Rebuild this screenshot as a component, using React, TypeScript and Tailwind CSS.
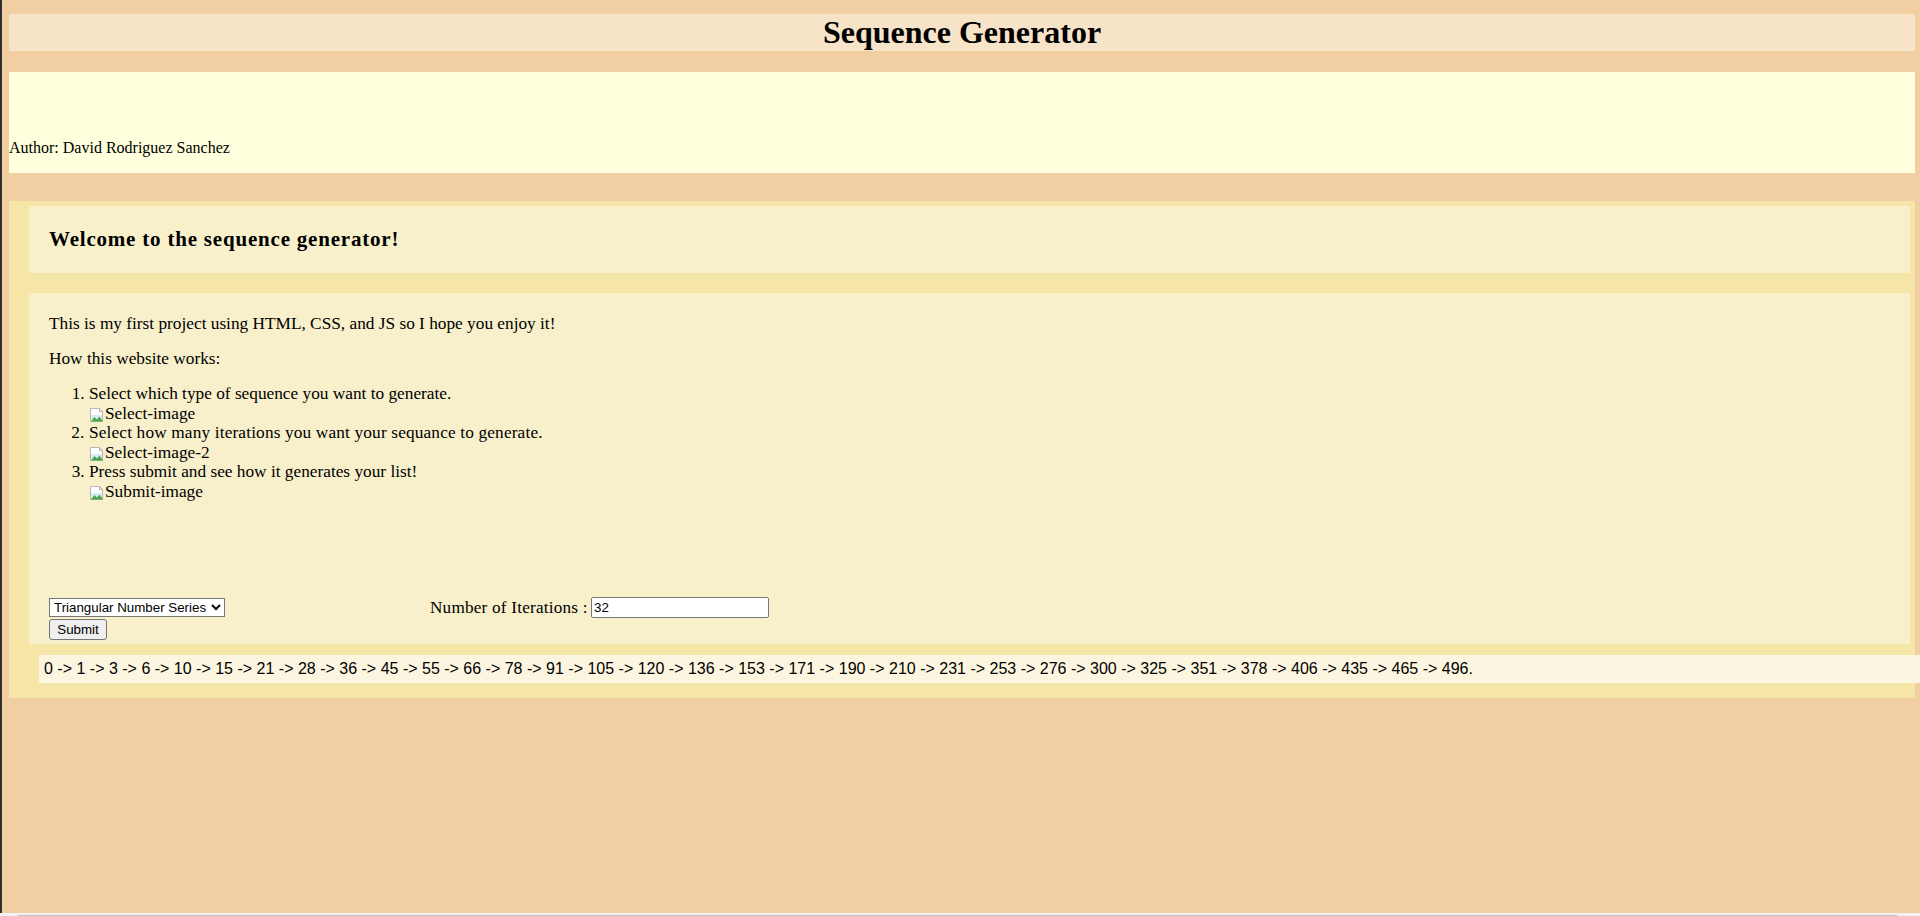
import React from "react";

function BrokenImg({ alt }: { alt: string }) {
  return (
    <span className="inline-flex items-end">
      <svg width="16" height="16" viewBox="0 0 16 16" className="shrink-0">
        <path d="M1.5 1.5h9l3 3v10h-12z" fill="#ffffff" stroke="#b5b5b5" />
        <path d="M10.5 1.5v3h3" fill="none" stroke="#b5b5b5" />
        <path d="M2 8h11v6H2z" fill="#dcecf7" />
        <path d="M2 14.5l3.5-4.5 2.5 2.5 2.5-3 3.5 5z" fill="#48a848" />
      </svg>
      <span>{alt}</span>
    </span>
  );
}

const seq = (() => {
  const arr: number[] = [];
  for (let i = 0; i < 32; i++) arr.push((i * (i + 1)) / 2);
  return arr.join(" -> ") + ".";
})();

export default function App() {
  return (
    <div className="h-[916px] w-[1920px] bg-[#f2cfa3] flex overflow-hidden relative text-black">
      <div className="w-[2px] bg-[#2f2f2f] shrink-0" />
      <div className="flex-1 min-w-0 pl-[7px] pr-[5px] pt-[14px] flex flex-col">
        <h1 className="h-[37px] bg-[#f7e3c8] flex items-center justify-center text-[32px] font-bold font-['Liberation_Serif',serif] leading-[37px]">
          Sequence Generator
        </h1>

        <div className="mt-[21px] h-[101px] bg-[#ffffdd] flex flex-col justify-end">
          <p className="mb-[16px] text-[16px] leading-[18px] font-['Liberation_Serif',serif]">
            Author: David Rodriguez Sanchez
          </p>
        </div>

        <div className="mt-[28px] bg-[#f5e6a7] pt-[5px] pl-[20px] pr-[5px] pb-[15px]">
          <div className="h-[67px] bg-[#f8f0cb] flex items-center px-[20px]">
            <h3 className="text-[21px] tracking-[0.8px] font-bold font-['Liberation_Serif',serif]">
              Welcome to the sequence generator!
            </h3>
          </div>

          <div className="mt-[20px] bg-[#f8f0cb] pt-[21px] pb-[4px] px-[20px] font-['Liberation_Serif',serif] text-[17.3px]">
            <p className="leading-[19px]">
              This is my first project using HTML, CSS, and JS so I hope you enjoy it!
            </p>
            <p className="mt-[16px] leading-[19px]">How this website works:</p>
            <ol className="mt-[16px] list-decimal pl-[40px]">
              <li className="leading-[19px]">
                Select which type of sequence you want to generate.
                <div className="h-[20px] flex items-center">
                  <BrokenImg alt="Select-image" />
                </div>
              </li>
              <li className="leading-[19px] tracking-[0.15px]">
                Select how many iterations you want your sequance to generate.
                <div className="h-[20px] flex items-center tracking-normal">
                  <BrokenImg alt="Select-image-2" />
                </div>
              </li>
              <li className="leading-[19px]">
                Press submit and see how it generates your list!
                <div className="h-[20px] flex items-center">
                  <BrokenImg alt="Submit-image" />
                </div>
              </li>
            </ol>

            <div className="mt-[96px] flex flex-col items-start">
              <div className="flex items-center h-[21px]">
                <select
                  defaultValue="tri"
                  className="w-[176px] h-[19px] bg-white border border-[#767676] text-[13.33px] font-['Liberation_Sans',Arial,sans-serif] text-black"
                >
                  <option value="tri">Triangular Number Series</option>
                  <option value="fib">Fibonacci Series</option>
                </select>
                <label className="ml-[205px] w-[161px] text-[17.2px] tracking-[0.2px] font-['Liberation_Serif',serif] whitespace-nowrap">
                  Number of Iterations :
                </label>
                <input
                  defaultValue="32"
                  className="w-[178px] h-[21px] bg-white border border-[#767676] rounded-[2px] px-[2px] text-[13.33px] font-['Liberation_Sans',Arial,sans-serif] text-black"
                />
              </div>
              <button className="block mt-[1px] h-[21px] w-[58px] bg-[#efefef] border border-[#767676] rounded-[3px] text-[13.33px] leading-[19px] font-['Liberation_Sans',Arial,sans-serif] text-black">
                Submit
              </button>
            </div>
          </div>

          <div className="mt-[11px] ml-[10px] mr-[-12px] h-[28px] bg-[#fcf6e0] flex items-center pl-[5px] text-[16px] font-['Liberation_Sans',Arial,sans-serif] whitespace-nowrap">
            {seq}
          </div>
        </div>

        <div className="flex-1" />
        <div className="h-[3px] bg-[#f1f1f1] -ml-[9px] -mr-[5px] flex items-end">
          <div className="ml-[18px] w-[1879px] h-[1px] bg-[#c1c1c1]" />
        </div>
      </div>
    </div>
  );
}
